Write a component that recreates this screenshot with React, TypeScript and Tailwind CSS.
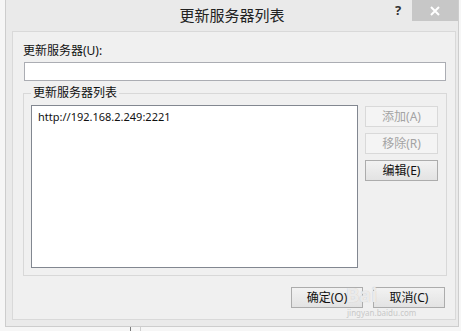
import React from "react";

const font = { fontFamily: '"Noto Sans", "Noto Sans CJK SC", sans-serif' };

function Btn({ label, disabled, w }: { label: string; disabled?: boolean; w: string }) {
  return (
    <div
      className={
        "h-[21px] flex items-center justify-center text-[12px] leading-none border " +
        w +
        " " +
        (disabled
          ? "border-[#d9d9d9] bg-[#f4f4f4] text-[#a3a3a3]"
          : "border-[#acacac] bg-gradient-to-b from-[#f2f2f2] to-[#e3e3e3] text-[#111]")
      }
    >
      {label}
    </div>
  );
}

export default function App() {
  return (
    <div className="w-[461px] h-[331px] bg-[#f6f6f6] overflow-hidden relative" style={font}>
      <div className="ml-[5px] w-[454px] h-[327px] border-x border-b border-[#cdcdcd] bg-[#eaeaea] flex flex-col">
        {/* title bar */}
        <div className="h-[31px] flex items-start relative shrink-0">
          <div className="flex-1 h-[31px] flex items-center justify-center text-[15px] text-[#222]">
            更新服务器列表
          </div>
          <div className="absolute left-[389px] top-[4px] text-[13px] font-bold text-[#333] leading-none">?</div>
          <div className="absolute left-[406px] top-0 w-[46px] h-[21px] bg-[#c7c7c7] flex items-center justify-center">
            <svg width="10" height="10" viewBox="0 0 10 10">
              <path d="M1 1 L9 9 M9 1 L1 9" stroke="#fff" strokeWidth="2" />
            </svg>
          </div>
        </div>
        {/* content */}
        <div className="ml-[6px] w-[444px] h-[289px] border border-[#d9d9d9] bg-[#f0f0f0] flex flex-col">
          <div className="pt-[10px] pl-[10px] h-[28px] text-[12px] leading-[18px] text-[#111]">更新服务器(U):</div>
          <div className="mt-[2px] ml-[11px] w-[422px] h-[19px] border border-[#abadb3] bg-white" />
          <fieldset className="mt-[5px] ml-[10px] w-[424px] h-[190px] border border-[#d8d8d8] px-0 pb-0 m-0 min-w-0">
            <legend className="ml-[7px] px-[2px] text-[12px] leading-[14px] text-[#111]">更新服务器列表</legend>
            <div className="flex pl-[7px] pt-[5px] gap-[7px]">
              <div className="w-[327px] h-[163px] border border-[#828790] bg-white pl-[6px] pt-[3px]">
                <div className="text-[11px] leading-[16px] text-[#111]">http://192.168.2.249:2221</div>
              </div>
              <div className="flex flex-col gap-[6px] mt-[1px]">
                <Btn label="添加(A)" disabled w="w-[73px]" />
                <Btn label="移除(R)" disabled w="w-[73px]" />
                <Btn label="编辑(E)" w="w-[73px]" />
              </div>
            </div>
          </fieldset>
          <div className="mt-[11px] pr-[10px] flex justify-end gap-[10px]">
            <Btn label="确定(O)" w="w-[72px]" />
            <Btn label="取消(C)" w="w-[72px]" />
          </div>
        </div>
      </div>
      <div className="ml-[130px] w-[11px] h-[4px] border-l border-[#7a7a7a] border-r border-r-[#d0d0d0]" />
      {/* watermark */}
      <div className="absolute left-[346px] top-[285px] text-[20px] font-bold leading-none text-white/70 pointer-events-none" style={{ textShadow: "0 0 1px #bbb" }}>
        Bai
      </div>
      <div className="absolute left-[347px] top-[309px] text-[8px] leading-none text-[#c8c8c8] pointer-events-none">
        jingyan.baidu.com
      </div>
    </div>
  );
}
